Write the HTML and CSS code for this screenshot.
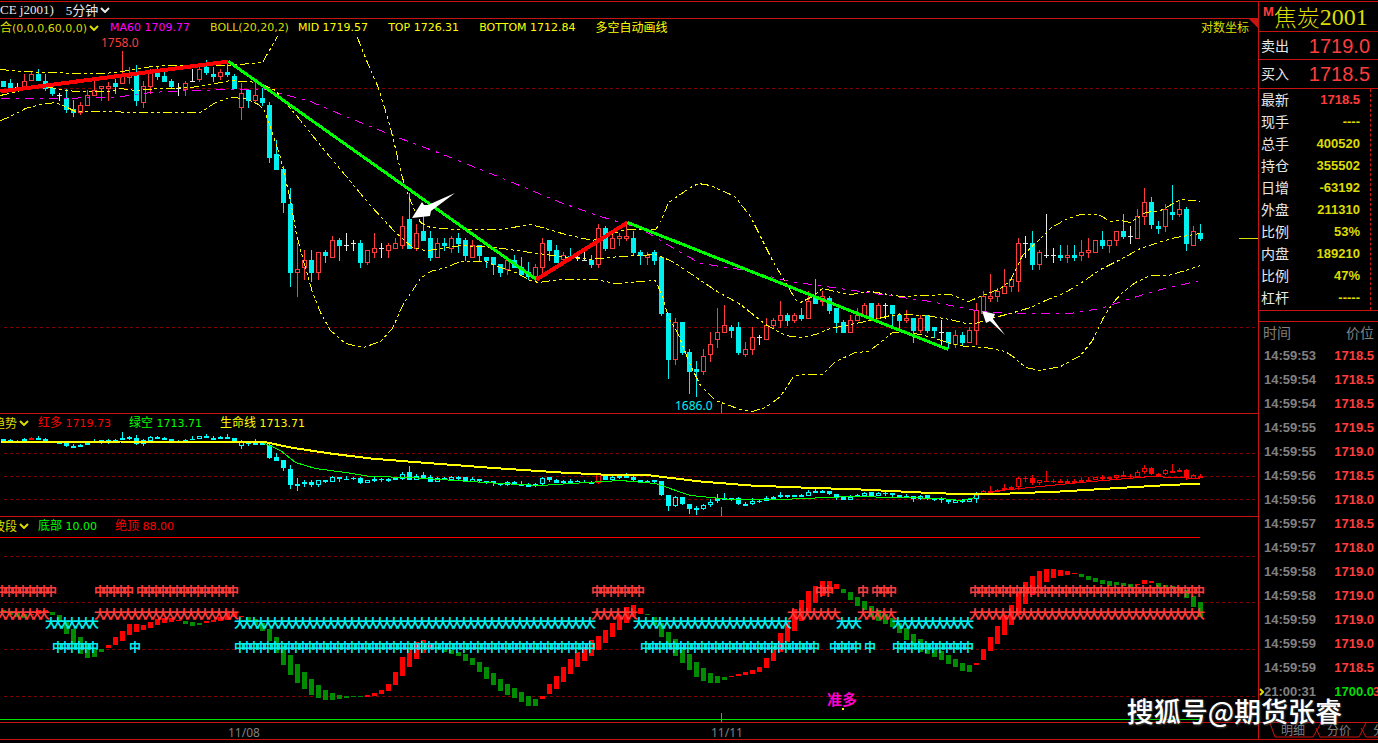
FILE: index.html
```html
<!DOCTYPE html>
<html lang="zh-CN">
<head>
<meta charset="utf-8">
<title>焦炭2001</title>
<link rel="stylesheet" href="styles.css">
</head>
<body>
<div class="terminal">
  <main class="charts">
    <header class="topbar">
      <span>CE j2001)</span>
      <button class="picker" type="button">5分钟<svg class="chevron" viewBox="0 0 10 6"><path d="M1 1l4 4 4-4"/></svg></button>
    </header>

    <section class="panel">
      <div class="legend overlay">
        <button class="picker indicator yellow" type="button"><span><b>合</b>(0,0,0,60,0,0)</span><svg class="chevron" viewBox="0 0 10 6"><path d="M1 1l4 4 4-4"/></svg></button>
        <span class="magenta">MA60 1709.77</span>
        <span class="boll yellow">BOLL(20,20,2)</span>
        <span class="bright">MID 1719.57</span>
        <span class="bright">TOP 1726.31</span>
        <span class="bright">BOTTOM 1712.84</span>
        <span class="bright"><b>多空自动画线</b></span>
        <button class="scale yellow" type="button"><b>对数坐标</b></button>
      </div>
      <svg class="plot" id="price" viewBox="0 19 1258 394"></svg>
    </section>

    <section class="panel">
      <div class="legend">
        <button class="picker clipped yellow" type="button"><b>趋势</b><svg class="chevron" viewBox="0 0 10 6"><path d="M1 1l4 4 4-4"/></svg></button>
        <span class="red"><b>红多</b> 1719.73</span>
        <span class="green"><b>绿空</b> 1713.71</span>
        <span class="bright"><b>生命线</b> 1713.71</span>
      </div>
      <svg class="plot" id="trend" viewBox="0 414 1258 102"></svg>
    </section>

    <section class="panel">
      <div class="legend">
        <button class="picker clipped yellow" type="button"><b>波段</b><svg class="chevron" viewBox="0 0 10 6"><path d="M1 1l4 4 4-4"/></svg></button>
        <span class="green"><b>底部</b> 10.00</span>
        <span class="red"><b>绝顶</b> 88.00</span>
      </div>
      <svg class="plot" id="swing" viewBox="0 517 1258 205"></svg>
    </section>

    <svg class="plot" viewBox="0 723 1258 16">
      <text class="date" x="228" y="737">11/08</text>
      <text class="date" x="711" y="737">11/11</text>
    </svg>
  </main>

  <aside class="quote">
    <h1 class="name"><sup>M</sup>焦炭<span>2001</span></h1>
    <div class="deal"><span>卖出</span><b>1719.0</b></div>
    <div class="deal"><span>买入</span><b>1718.5</b></div>
    <dl class="stats">
      <div><dt>最新</dt><dd class="up">1718.5</dd></div>
      <div><dt>现手</dt><dd>----</dd></div>
      <div><dt>总手</dt><dd>400520</dd></div>
      <div><dt>持仓</dt><dd>355502</dd></div>
      <div><dt>日增</dt><dd>-63192</dd></div>
      <div><dt>外盘</dt><dd>211310</dd></div>
      <div><dt>比例</dt><dd>53%</dd></div>
      <div><dt>内盘</dt><dd>189210</dd></div>
      <div><dt>比例</dt><dd>47%</dd></div>
      <div><dt>杠杆</dt><dd>-----</dd></div>
    </dl>
    <div class="divider"></div>
    <table class="ticks">
      <thead><tr><th>时间</th><th>价位</th></tr></thead>
      <tbody>
        <tr><td>14:59:53</td><td>1718.5</td></tr>
        <tr><td>14:59:54</td><td>1718.5</td></tr>
        <tr><td>14:59:54</td><td>1718.5</td></tr>
        <tr><td>14:59:55</td><td>1719.5</td></tr>
        <tr><td>14:59:55</td><td>1719.0</td></tr>
        <tr><td>14:59:56</td><td>1718.5</td></tr>
        <tr><td>14:59:56</td><td>1718.0</td></tr>
        <tr><td>14:59:57</td><td>1718.5</td></tr>
        <tr><td>14:59:57</td><td>1718.0</td></tr>
        <tr><td>14:59:58</td><td>1719.0</td></tr>
        <tr><td>14:59:58</td><td>1719.0</td></tr>
        <tr><td>14:59:59</td><td>1719.0</td></tr>
        <tr><td>14:59:59</td><td>1719.0</td></tr>
        <tr><td>14:59:59</td><td>1718.5</td></tr>
        <tr class="latest"><td><svg class="pointer" viewBox="0 0 5 8"><path d="M1 1l3 3-3 3"/></svg>21:00:31</td><td>1700.0<em>3</em></td></tr>
      </tbody>
    </table>
    <nav class="tabs">
      <svg class="tab-lines" viewBox="0 0 119 16"><path d="M11 0l5 14h38l8-14M57 5l4 9h39l7-14M102 5l5 9h12"/></svg>
      <button type="button">明细</button>
      <button type="button">分价</button>
      <button type="button">分</button>
    </nav>
  </aside>
  <div class="watermark">搜狐号@期货张睿</div>
</div>
<script src="chart.js"></script>
</body>
</html>
```
FILE: styles.css
```css
* { box-sizing: border-box; }

body {
  margin: 0;
  padding-top: 1px;
  background: #000;
  color: #e8e8e8;
  font: 12px/18px "Noto Sans", "Noto Sans CJK SC", sans-serif;
  overflow: hidden;
}

button {
  margin: 0;
  padding: 0;
  border: 0;
  background: none;
  color: inherit;
  font: inherit;
  white-space: nowrap;
}

.terminal {
  position: relative;
  display: grid;
  grid-template-columns: minmax(0, 1fr) 120px;
  border-top: 1px solid #c81410;
  border-bottom: 1px solid #c81410;
}

.terminal::after {
  content: "";
  position: absolute;
  top: 100%;
  left: 0;
  right: 0;
  margin-top: 3px;
  border-top: 1px solid #808080;
}

.charts { min-width: 0; }

.topbar {
  display: flex;
  gap: 12px;
  height: 17px;
  border-bottom: 1px solid #c81410;
  font: 13px/15px "Liberation Serif", "Noto Sans CJK SC", serif;
}

.picker {
  display: flex;
  align-items: center;
  gap: 2px;
}

.chevron {
  width: 10px;
  height: 6px;
  fill: none;
  stroke: currentColor;
  stroke-width: 2;
}

.panel {
  position: relative;
  border-bottom: 1px solid #c81410;
}

.panel:first-of-type::after {
  content: "";
  position: absolute;
  top: 0;
  right: 0;
  border-top: 9px solid #c81410;
  border-left: 9px solid transparent;
}

.legend {
  position: absolute;
  inset: 0 0 auto 0;
  display: flex;
  gap: 18px;
  height: 18px;
  font: 11px/18px "DejaVu Sans", "Noto Sans CJK SC", sans-serif;
  white-space: nowrap;
}

.overlay { gap: 20px; }

.legend b {
  font: 12px/16px "Noto Sans CJK SC", sans-serif;
}

.indicator { margin: 0 -9px 0 0; }
.clipped { margin: 0 -9px 0 -7px; }
.boll { margin-right: -11px; }
.scale { margin: 0 9px 0 auto; }

.yellow { color: #dcdc00; }
.bright { color: #ff0; }
.magenta { color: #f0f; }
.red { color: #f00; }
.green { color: #0f0; }

.plot {
  display: block;
  width: 100%;
  height: auto;
  shape-rendering: crispEdges;
}

.plot .grid { stroke: #800000; stroke-dasharray: 3 3; }
.plot .band { fill: none; stroke: #ff0; stroke-dasharray: 9 3 3 3 3 3; }
.plot .ma60 { fill: none; stroke: #f0f; stroke-dasharray: 9 6 3 6; }
.plot .line { fill: none; stroke-width: 1; }
.plot .trendline { fill: none; stroke-width: 3; }
.plot .rise { stroke-width: 4; }
.plot .life { stroke-width: 2; }
.plot .arrow { fill: #fff; shape-rendering: auto; }
.plot .mark { font: bold 12px "Noto Sans CJK SC", sans-serif; text-anchor: middle; }
.plot .call { font: bold 15px "Noto Sans CJK SC", sans-serif; fill: #f0c; }
.plot .date { fill: #808080; }

.quote {
  display: flex;
  flex-direction: column;
  min-width: 0;
  border-left: 1px solid #c81410;
  overflow: hidden;
}

.name {
  display: flex;
  height: 30px;
  margin: 0;
  padding-left: 4px;
  border-bottom: 1px solid #c81410;
  color: #dcdc00;
  font: 300 23px/29px "Noto Sans CJK SC", sans-serif;
  white-space: nowrap;
}

.name sup {
  color: #ff3c3c;
  font: bold 13px/19px "Liberation Sans", sans-serif;
}

.name span { font: 24px/31px "Liberation Serif", serif; }

.deal {
  display: flex;
  justify-content: space-between;
  align-items: center;
  height: 28px;
  padding: 0 8px 0 2px;
  border-bottom: 1px solid #c81410;
  font-size: 14px;
}

.deal + .deal { height: 29px; }

.deal b {
  color: #ff3c3c;
  font: 20px/28px "Liberation Sans", sans-serif;
}

.stats {
  margin: 0 7px 0 0;
  padding: 0 10px 1px 2px;
  border-right: 1px dashed #c81410;
  font-size: 14px;
  line-height: 22px;
}

.stats div {
  display: flex;
  justify-content: space-between;
}

.stats dd {
  margin: 0;
  color: #dcdc00;
  font: bold 13px/22px "Liberation Sans", sans-serif;
}

.stats .up { color: #ff3c3c; }

.divider {
  height: 12px;
  border: 1px solid #c81410;
  border-width: 1px 0;
}

.ticks {
  width: 100%;
  border-collapse: collapse;
  color: #808080;
}

.ticks th {
  height: 22px;
  padding: 0 4px;
  font-size: 14px;
  font-weight: normal;
  line-height: 22px;
  text-align: left;
}

.ticks th:last-child { text-align: right; }

.ticks td {
  position: relative;
  height: 24px;
  padding: 0 4px 0 5px;
  font: bold 13px/24px "Liberation Sans", sans-serif;
}

.ticks td:last-child {
  color: #ff3c3c;
  text-align: right;
}

.ticks .latest td:last-child { color: #00dc00; }

.pointer {
  position: absolute;
  top: 8px;
  left: 0;
  width: 5px;
  height: 8px;
  fill: none;
  stroke: #dcdc00;
  stroke-width: 2;
}

.latest em {
  position: absolute;
  top: 0;
  right: -2px;
  color: #ff3c3c;
  font-style: normal;
}

.tabs {
  position: relative;
  display: flex;
  gap: 22px;
  height: 17px;
  margin-top: auto;
  padding-left: 22px;
  border-top: 1px solid #c81410;
  color: #808080;
  line-height: 16px;
}

.tab-lines {
  position: absolute;
  inset: 0;
  width: 119px;
  height: 16px;
  fill: none;
  stroke: #c81410;
}

.watermark {
  position: absolute;
  right: 36px;
  bottom: 9px;
  color: #fff;
  font: 500 27px/38px "Noto Sans CJK SC", sans-serif;
  text-shadow: 1px 1px 2px #444;
  white-space: nowrap;
}
```
FILE: chart.js
```js
const RED = '#ff3c3c';
const CYAN = '#00f0f0';
const WHITE = '#e8e8e8';
const STEP = 7;
const center = (i) => 3 + i * STEP;

// kind, high, body top, body bottom, low
const candles = `
c81,81,87,87 c79,83,88,88 w83,87,87,88 r74,81,87,87 r72,74,81,81 c69,74,81,81 c74,81,89,91 c87,88,94,96
w93,95,95,101 c89,98,110,113 c100,109,113,117 r102,105,113,115 r90,95,106,106 r79,90,96,96 r86,86,89,101
r82,86,89,101 c79,83,87,94 r51,74,84,84 r67,73,78,84 c65,74,101,106 r81,86,103,108 r69,71,87,94 c67,70,77,80
c71,76,82,82 c79,81,87,88 w83,88,88,96 r81,83,90,96 w69,81,81,82 r66,69,80,82 c60,67,73,75 c67,74,77,82
r69,72,77,80 c61,72,75,77 c74,76,89,89 r83,93,108,120 c90,90,101,108 r82,95,101,103 c88,98,103,106
c102,105,158,163 c140,154,170,170 c166,169,203,213 c188,204,273,287 r243,269,273,297 r250,260,268,280
c250,260,273,282 r252,252,273,280 c250,252,256,263 r236,240,258,258 c238,240,246,261 w233,245,245,251
w240,243,243,251 c240,243,263,268 r250,250,263,265 r233,248,253,258 w243,248,248,258 r243,245,251,258
r238,243,249,249 r216,226,246,249 c193,219,249,249 r224,233,249,251 c216,231,241,241 c231,238,258,261
r238,243,258,258 c238,243,246,251 r236,238,249,253 c233,238,244,253 c238,240,256,261 r240,245,258,258
c245,245,256,261 c257,257,261,268 c257,257,265,275 c264,264,273,277 r257,260,270,275 c255,260,268,268
c257,267,275,275 c262,272,277,280 r264,267,277,279 r238,243,268,273 c240,240,251,261 c245,250,263,263
r252,255,260,260 c248,256,258,261 w253,257,257,261 w252,260,260,261 c255,260,265,268 r224,228,265,268
c226,228,249,251 r233,238,249,249 r233,236,239,246 r221,236,239,241 c231,238,253,255 c250,252,256,265
r252,255,258,265 c250,252,261,265 c257,257,314,316 c313,313,360,379 r318,322,360,365 c322,322,353,355
c349,352,372,394 c361,369,372,397 r349,356,372,375 r332,344,355,362 r308,332,340,348 r305,325,333,333
c325,327,331,338 c322,327,353,355 r342,349,355,357 r327,337,350,355 w335,337,337,345 r318,325,340,340
r318,320,326,329 r301,315,321,328 c313,315,321,326 r313,315,321,323 c308,315,319,321 r291,301,319,319
c279,298,304,304 r291,296,302,306 c296,298,311,314 c308,308,323,333 c320,322,333,333 r315,320,333,333
r308,315,321,321 r303,305,316,316 c303,303,319,321 r303,305,319,319 w303,305,305,319 c305,305,314,326
c313,315,321,328 r310,318,321,323 c318,318,331,343 r315,318,331,333 c315,315,331,333 c327,327,331,338
w320,332,332,345 c332,332,343,349 r330,335,345,348 c332,335,343,345 r327,330,343,343 r303,310,331,345
r291,296,314,314 r274,296,299,302 r288,291,297,302 r269,286,294,294 r277,279,287,292 r238,243,282,292
w236,243,243,258 c231,243,265,270 r250,252,265,270 w214,255,255,258 w248,255,255,263 c245,255,258,261
r245,255,258,263 c245,255,258,261 r240,252,256,261 r238,250,253,258 r240,240,253,253 c231,240,246,249
r240,240,246,253 r231,231,241,246 c214,231,237,239 w226,236,236,244 r209,216,239,239 r188,202,217,225
c197,202,225,229 c221,226,229,234 r204,209,227,232 c185,212,215,220 r200,209,215,217 c207,209,244,251
r226,231,246,246 c224,233,239,241`.trim().split(/\s+/).map((s) => [s[0], ...s.slice(1).split(',').map(Number)]);

// kind, top, bottom
const bars = `
g610,612 g611,615 g613,617 g614,618 r614,615 r610,614 r610,612 g612,615 g615,621 g621,634 g629,644 g637,654
g644,658 g649,657 g649,652 r645,648 r637,645 r631,641 r624,635 r624,632 r625,630 r622,628 r619,625 r618,623
r618,622 r620,621 g621,624 g622,626 g623,625 r621,623 r620,622 r617,621 r613,620 r613,617 r616,617 g617,621
g619,625 g623,631 g629,641 g637,653 g646,665 g655,675 g664,683 g672,689 g679,695 g685,698 g690,700 g693,700
g695,699 g696,698 g696,697 g696,697 r695,697 r693,696 r690,694 r684,691 r672,685 r657,676 r649,667 r642,659
r640,653 r645,649 r647,648 g649,652 g650,654 g652,656 g654,661 g658,665 g662,672 g667,679 g673,685 g679,691
g684,695 g688,698 g692,702 g696,706 g699,706 r696,699 r684,694 r676,689 r667,682 r659,674 r652,667 r647,661
r640,656 r636,650 r630,643 r623,637 r615,630 r607,623 r605,617 r608,614 g614,615 g617,625 g623,637 g632,647
g639,656 g647,663 g654,670 g662,677 g668,681 g673,683 g676,683 g677,680 r676,677 r674,676 r672,675 r670,674
r667,672 r658,668 r646,661 r633,652 r622,642 r609,631 r600,621 r591,612 r586,603 r581,596 r581,591 r584,589
g589,593 g592,600 g597,606 g601,610 g606,617 g610,621 g614,624 g618,627 g623,633 g628,640 g634,646 g639,652
g644,654 g648,657 g651,660 g655,664 g659,667 g663,671 g665,672 r663,665 r649,660 r637,651 r626,644 r615,635
r605,625 r593,615 r582,604 r576,595 r571,588 r569,582 r569,578 r570,576 r571,575 r573,574 g574,577 g576,580
g578,582 g580,584 g581,586 g582,585 g583,586 g584,587 r584,585 r580,584 r581,583 g583,587 g585,588 g586,589
g587,591 g590,598 g596,607 g602,617`.trim().split(/\s+/).map((s) => [s[0], ...s.slice(1).split(',').map(Number)]);

const rect = (x, y, w, h, color) => `<rect x="${x}" y="${y}" width="${w}" height="${h}" fill="${color}"/>`;
const line = (cls, points, extra = '') => `<polyline class="${cls}" points="${points}" transform="translate(.5 .5)" ${extra}/>`;
const grid = (ys) => ys.map((y) => line('grid', `3,${y} 1258,${y}`)).join('');

function candle([kind, high, top, bottom, low], i, colors, scale) {
  const x = center(i);
  const [h, t, b, l] = [high, top, bottom, low].map(scale);
  const color = colors(kind, i);
  if (kind === 'w') return rect(x, h, 1, Math.max(l - h, 1), color) + rect(x - 2, t, 5, 1, color);
  const size = Math.max(b - t, 2);
  const upper = rect(x, h, 1, Math.max(t - h, 0), color);
  const lower = rect(x, t + size, 1, Math.max(l - t - size, 0), color);
  if (kind === 'c') return upper + lower + rect(x - 2, t, 5, size, color);
  return upper + lower + `<rect x="${x - 1.5}" y="${t + 0.5}" width="4" height="${size - 1}" fill="none" stroke="${color}"/>`;
}

function marks(char, ranges, y, color) {
  return ranges.map(([from, to]) => {
    const n = to - from + 1;
    const xs = Array.from({ length: n }, (_, k) => center(from + k) - 1).join(' ');
    return `<text class="mark" x="${xs}" y="${y}" fill="${color}">${char.repeat(n)}</text>`;
  }).join('');
}

document.getElementById('price').innerHTML =
  grid([88, 327]) +
  candles.map((c, i) => candle(c, i, (k) => ({ r: RED, c: CYAN, w: WHITE })[k], (y) => y)).join('') +
  line('ma60', '0,98 70,98 85,97 110,97 130,95 150,92 190,90 230,89 265,89 280,93 310,101 350,118 400,138 440,153 500,177 560,202 600,216 640,228 670,246 700,263 740,269 790,281 860,291 930,301 980,311 1010,313 1070,313 1100,308 1130,298 1160,289 1200,280') +
  line('band', '0,69 20,71 50,72 78,73 105,73 128,70 143,67 165,65 228,65 262,62 266,55 277,36') +
  line('band', '357,37 360,45 369,67 377,85 384,107 392,135 400,170 405,188 412,205 420,222 430,227 440,228 460,229 500,229 530,224 545,228 565,234 592,240 605,236 625,229 655,229 660,222 668,202 690,187 698,183 710,185 730,194 735,197 750,216 762,240 772,260 785,282 795,299 800,302 812,296 822,288 835,291 850,294 870,291 900,296 950,294 968,301 980,296 1000,288 1010,280 1022,255 1040,238 1050,228 1065,219 1080,214 1098,214 1110,221 1120,220 1130,222 1145,212 1160,210 1180,199 1200,201') +
  line('band', '0,95 25,89 45,86 60,89 75,91 110,91 120,88 135,90 160,88 190,87 210,84 230,80 258,82 275,90 300,120 320,145 345,175 370,205 395,232 412,247 425,250 437,249 460,245 495,247 530,252 560,256 590,259 620,256 655,254 672,261 690,273 715,290 740,304 765,324 785,335 800,337 815,334 830,328 850,324 870,320 890,315 905,314 925,315 950,319 965,323 975,323 990,318 1010,313 1030,307 1045,300 1065,292 1080,283 1100,269 1120,259 1140,248 1155,243 1175,237 1200,233') +
  line('band', '0,120 10,116 25,108 40,104 55,102 65,106 75,111 100,111 140,112 200,112 215,102 230,97 245,98 258,104 264,110 270,127 280,157 290,200 296,234 304,264 312,292 320,312 330,330 345,343 363,347 380,341 392,328 402,305 412,290 420,278 430,271 445,267 460,261 485,261 500,267 515,272 530,280 538,282 560,279 595,279 615,283 655,280 662,296 668,317 677,332 690,365 700,385 715,400 740,409 752,411 765,407 780,396 793,376 803,374 822,374 835,361 855,352 868,351 880,342 892,332 905,332 920,334 935,338 950,343 965,346 985,347 1005,351 1015,358 1025,367 1040,370 1060,366 1080,355 1092,340 1103,317 1112,303 1122,292 1135,282 1150,275 1168,275 1185,270 1200,265') +
  line('trendline rise', '0,91 228,61', 'stroke="#f00"') +
  line('trendline', '228,61 536,279', 'stroke="#0f0"') +
  line('trendline rise', '536,279 627,222', 'stroke="#f00"') +
  line('trendline', '627,222 948,349', 'stroke="#0f0"') +
  '<path class="arrow" d="M412 218L422 202L424 205L428 205L455 193L431 211L430 216Z"/>' +
  '<path class="arrow" d="M982 311L995 314L993 319L1005 335L990 321L986 323Z"/>' +
  rect(1239, 238, 19, 1, '#dcdc00') + rect(721, 404, 1, 9, '#808080') +
  `<text x="101" y="47" fill="${RED}">1758.0</text><text x="675" y="410" fill="${CYAN}">1686.0</text>`;

document.getElementById('trend').innerHTML =
  grid([453, 476, 499]) +
  candles.map((c, i) => candle(c, i, () => (i === 4 || i === 85 || i > 139 ? '#f00' : '#0ff'), (y) => Math.round(432 + (y - 51) * 0.24))).join('') +
  line('line', '0,442 20,442 60,442', 'stroke="#0f0"') +
  line('line', '262,442 280,450 295,462 315,468 345,472 370,476 410,477 440,479 500,483 540,485 570,483 620,480 655,483 690,495 730,499 780,499 850,496 900,497 940,498 960,500 975,497', 'stroke="#0f0"') +
  line('line', '975,495 1000,490 1030,487 1080,482 1150,476 1200,478', 'stroke="#f00"') +
  line('trendline life', '0,441 60,441 85,442 120,441 262,441 290,447 330,453 370,458 420,462 500,468 560,472 600,474 650,475 700,481 750,485 800,487 860,489 920,492 970,494 1010,493 1060,491 1110,488 1160,485 1200,483', 'stroke="#ff0"') +
  rect(721, 507, 1, 9, '#808080');

document.getElementById('swing').innerHTML =
  grid([556, 602, 649, 696]) +
  rect(0, 537, 1200, 1, '#f00') +
  bars.map(([kind, top, bottom], i) => rect(center(i) - 2, top, 5, bottom - top, kind === 'r' ? '#f00' : '#008c00')).join('') +
  marks('中', [[0, 7], [14, 18], [20, 33], [85, 91], [117, 118], [123, 123], [125, 127], [139, 171]], 596, RED) +
  marks('大', [[0, 6], [14, 33], [85, 90], [113, 119], [123, 127], [139, 171]], 619, RED) +
  marks('大', [[7, 13], [34, 84], [91, 112], [120, 122], [128, 138]], 628, CYAN) +
  marks('中', [[8, 13], [19, 19], [34, 84], [92, 116], [119, 122], [124, 124], [128, 138]], 652, CYAN) +
  '<text class="call" x="827" y="705">准多</text>' +
  rect(842, 708, 2, 2, '#ff0') + rect(0, 719, 1200, 1, '#00e400') + rect(721, 713, 1, 9, '#808080');
```
